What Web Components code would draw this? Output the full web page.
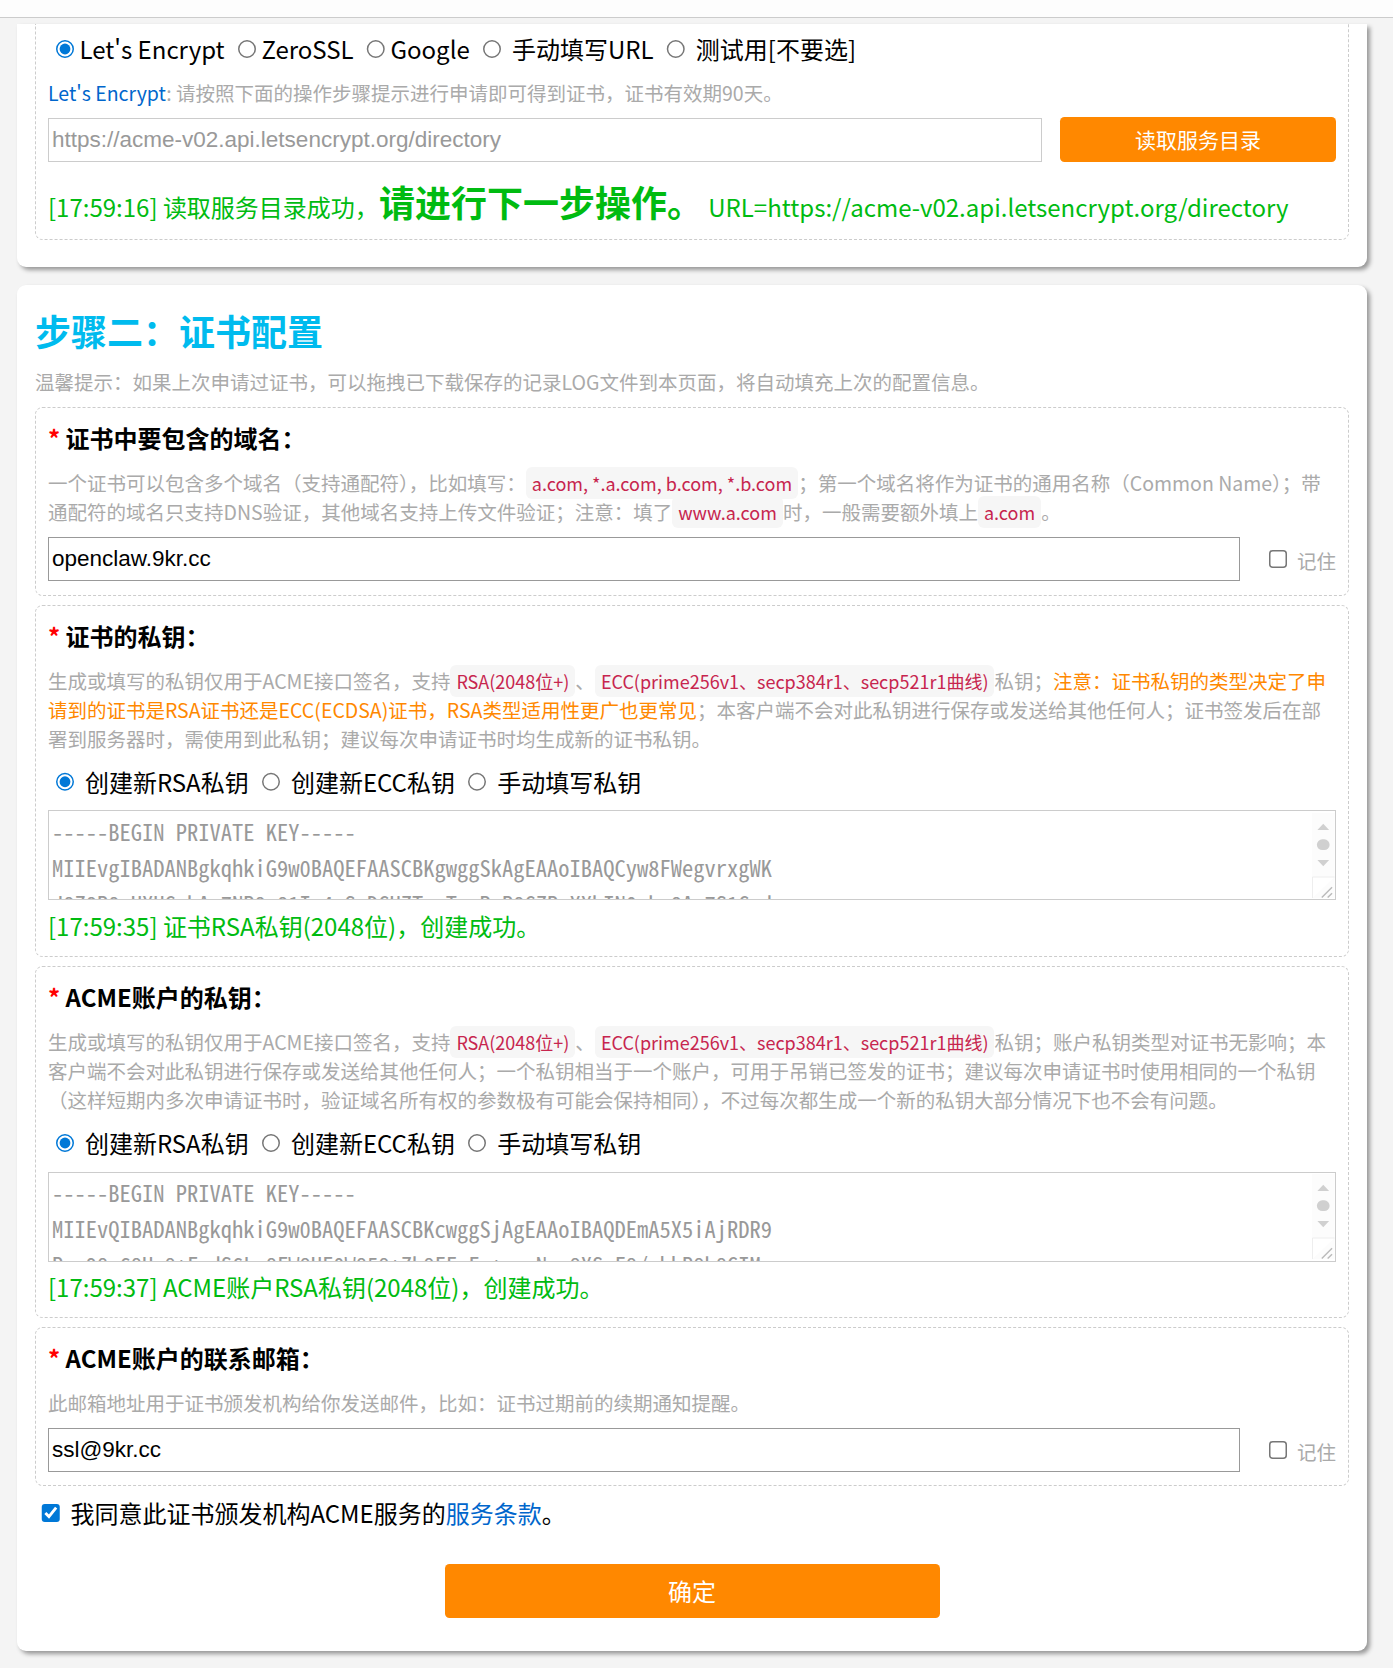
<!DOCTYPE html>
<html lang="zh-CN">
<head>
<meta charset="utf-8">
<title>ACME 证书申请</title>
<style>
  /* Sizes below are base units; the whole page is shown at 150%. */
  body {
    zoom: 1.5;
    margin: 0;
    background: #f4f4f4;
    color: #000;
    font: 16px/1.5 "Noto Sans CJK SC", sans-serif;
  }
  .page { padding: 0 6px 12px 0; }
  main {
    display: flex;
    flex-direction: column;
    gap: 12px;
    max-width: 900px;
    margin: 0 auto;
  }
  .warn { color: #f80; }
</style>
</head>
<body>
<acme-topbar></acme-topbar>
<div class="page">
<main>
  <acme-card continued>
    <acme-field continued>
      <acme-options slot="options" name="ca" items="Let's Encrypt|ZeroSSL|Google| 手动填写URL| 测试用[不要选]"></acme-options>
      <span slot="hint"><acme-link>Let's Encrypt</acme-link>: 请按照下面的操作步骤提示进行申请即可得到证书，证书有效期90天。</span>
      <acme-text label="服务目录URL" value="https://acme-v02.api.letsencrypt.org/directory" disabled>
        <acme-button size="small">读取服务目录</acme-button>
      </acme-text>
      <acme-log slot="log" time="17:59:16">读取服务目录成功，<acme-big>请进行下一步操作。</acme-big> URL=https://acme-v02.api.letsencrypt.org/directory</acme-log>
    </acme-field>
  </acme-card>

  <acme-card heading="步骤二：证书配置" tip="温馨提示：如果上次申请过证书，可以拖拽已下载保存的记录LOG文件到本页面，将自动填充上次的配置信息。">
    <acme-field heading="证书中要包含的域名：">
      <span slot="hint">一个证书可以包含多个域名（支持通配符），比如填写：<acme-code>a.com, *.a.com, b.com, *.b.com</acme-code>；第一个域名将作为证书的通用名称（Common Name）；带通配符的域名只支持DNS验证，其他域名支持上传文件验证；注意：填了<acme-code>www.a.com</acme-code>时，一般需要额外填上<acme-code>a.com</acme-code>。</span>
      <acme-text label="证书中要包含的域名" value="openclaw.9kr.cc"><acme-remember></acme-remember></acme-text>
    </acme-field>

    <acme-field heading="证书的私钥：">
      <span slot="hint">生成或填写的私钥仅用于ACME接口签名，支持<acme-code>RSA(2048位+)</acme-code>、<acme-code>ECC(prime256v1、secp384r1、secp521r1曲线)</acme-code>私钥；<span class="warn">注意：证书私钥的类型决定了申请到的证书是RSA证书还是ECC(ECDSA)证书，RSA类型适用性更广也更常见</span>；本客户端不会对此私钥进行保存或发送给其他任何人；证书签发后在部署到服务器时，需使用到此私钥；建议每次申请证书时均生成新的证书私钥。</span>
      <acme-options name="cert-key" items=" 创建新RSA私钥| 创建新ECC私钥| 手动填写私钥"></acme-options>
      <acme-key label="证书的私钥" value="-----BEGIN PRIVATE KEY-----
MIIEvgIBADANBgkqhkiG9w0BAQEFAASCBKgwggSkAgEAAoIBAQCyw8FWegvrxgWK
J8Z8R8+UXUGxhAv7NR8v81I+4rSpDGUZTwzTvpRrR8GZRvXXhIN0uhx8Av7S1Gsd"></acme-key>
      <acme-log slot="log" time="17:59:35">证书RSA私钥(2048位)，创建成功。</acme-log>
    </acme-field>

    <acme-field heading="ACME账户的私钥：">
      <span slot="hint">生成或填写的私钥仅用于ACME接口签名，支持<acme-code>RSA(2048位+)</acme-code>、<acme-code>ECC(prime256v1、secp384r1、secp521r1曲线)</acme-code>私钥；账户私钥类型对证书无影响；本客户端不会对此私钥进行保存或发送给其他任何人；一个私钥相当于一个账户，可用于吊销已签发的证书；建议每次申请证书时使用相同的一个私钥（这样短期内多次申请证书时，验证域名所有权的参数极有可能会保持相同），不过每次都生成一个新的私钥大部分情况下也不会有问题。</span>
      <acme-options name="account-key" items=" 创建新RSA私钥| 创建新ECC私钥| 手动填写私钥"></acme-options>
      <acme-key label="ACME账户的私钥" value="-----BEGIN PRIVATE KEY-----
MIIEvQIBADANBgkqhkiG9w0BAQEFAASCBKcwggSjAgEAAoIBAQDEmA5X5iAjRDR9
Rvu98v68Ux8+FvdS6Lv8FW8UF0W858+Zh8FFvFv+uuvNvv8XSvF8/vkkR8h8GIMx"></acme-key>
      <acme-log slot="log" time="17:59:37">ACME账户RSA私钥(2048位)，创建成功。</acme-log>
    </acme-field>

    <acme-field heading="ACME账户的联系邮箱：">
      <span slot="hint">此邮箱地址用于证书颁发机构给你发送邮件，比如：证书过期前的续期通知提醒。</span>
      <acme-text label="ACME账户的联系邮箱" value="ssl@9kr.cc"><acme-remember></acme-remember></acme-text>
    </acme-field>

    <acme-agree></acme-agree>
    <acme-button size="large">确定</acme-button>
  </acme-card>
</main>
</div>

<script>
const escapeHtml = s => s.replace(/[&<>"]/g, c => ({'&': '&amp;', '<': '&lt;', '>': '&gt;', '"': '&quot;'}[c]));

function define(name, css, render) {
  customElements.define(name, class extends HTMLElement {
    connectedCallback() {
      if (this.shadowRoot) return;
      this.attachShadow({mode: 'open'}).innerHTML = `<style>${css}</style>${render(this)}`;
    }
  });
}

define('acme-topbar', `
  :host { display: block; height: 11px; margin-bottom: 4px; background: #fdfdfd; border-bottom: 1px solid #ccc; }
`, () => '');

define('acme-card', `
  :host { display: flex; flex-direction: column; gap: 6px; padding: 12px 12px 22px; background: #fff;
    border-radius: 6px; box-shadow: 2px 2px 3px #999; }
  :host([continued]) { padding: 0 12px 18px; border-radius: 0 0 6px 6px; }
  header { display: flex; flex-direction: column; gap: 7px; padding-bottom: 1px; }
  h2 { margin: 0; color: #0be; font-size: 24px; line-height: 36px; }
  p { margin: 0; color: #aaa; font-size: 13px; }
`, el => (el.hasAttribute('heading')
  ? `<header><h2>${el.getAttribute('heading')}</h2><p>${el.getAttribute('tip')}</p></header>` : '') + '<slot></slot>');

define('acme-field', `
  :host { display: block; }
  section { display: flex; flex-direction: column; gap: 7px; padding: 8px 8px 9px; border: 1px dashed #ccc; border-radius: 5px; }
  section.logged { padding-bottom: 8px; }
  h3 { margin: 0 0 1px; font-size: 16px; line-height: 24px; }
  h3 span { color: #f00; }
  p { margin: 0; color: #aaa; font-size: 13px; }
  .body { display: flex; flex-direction: column; gap: 7px; }
  .work { display: flex; flex-direction: column; gap: 5px; }
  :host([continued]) section { padding-top: 5px; padding-bottom: 7px; border-top: 0; border-radius: 0 0 5px 5px; }
  :host([continued]) .work { gap: 8px; }
`, el => `<section class="${el.querySelector('[slot=log]') ? 'logged' : ''}">
  ${el.hasAttribute('heading') ? `<h3><span>*</span> ${el.getAttribute('heading')}</h3>` : ''}<slot name="options"></slot>
  <p><slot name="hint"></slot></p>
  <div class="work"><div class="body"><slot></slot></div><slot name="log"></slot></div>
</section>`);

define('acme-options', `
  :host { display: block; }
  input { accent-color: #0078d7; }
`, el => el.getAttribute('items').split('|').map((t, i) =>
  `<label><input type="radio" name="${el.getAttribute('name')}"${i ? '' : ' checked'}>${escapeHtml(t)}</label>`).join(' '));

define('acme-text', `
  :host { display: flex; align-items: center; }
  input { box-sizing: content-box; flex: 1; min-width: 0; height: 28px; padding: 0 2px; border: 1px solid #999; border-radius: 0;
    background: #fff; color: #000; font: 15px "Liberation Sans", sans-serif; }
  input:disabled { border-color: #ccc; color: #999; }
`, el => `<input type="text" aria-label="${el.getAttribute('label')}" value="${el.getAttribute('value')}"${el.hasAttribute('disabled') ? ' disabled' : ''}><slot></slot>`);

define('acme-remember', `
  :host { display: block; margin: 2px 0 0 15px; color: #aaa; font-size: 13px; }
  input { accent-color: #0078d7; }
`, () => '<label><input type="checkbox"> 记住</label>');

define('acme-key', `
  :host { display: block; position: relative; }
  textarea { display: block; box-sizing: border-box; width: 100%; height: 60px; padding: 1px 23px 0 2px; margin: 0;
    border: 1px solid #ccc; border-radius: 0; resize: none; overflow: hidden; background: #fff; color: #999;
    font: 15px/24px "Noto Sans Mono CJK SC", "Noto Sans CJK SC", monospace; font-feature-settings: "hwid"; white-space: pre; }
  svg { position: absolute; top: 1px; right: 1px; width: 15px; height: 58px; }
`, el => `<textarea aria-label="${el.getAttribute('label')}" disabled>${escapeHtml(el.getAttribute('value'))}</textarea>
<svg viewBox="0 0 23 87" aria-hidden="true">
  <rect width="23" height="87" fill="#fcfcfc"/>
  <path d="M5.500 17.500L11.500 11L17.500 17.500ZM5.500 48L11.500 54.500L17.500 48Z" fill="#d0d0d0"/>
  <rect x="5" y="27" width="13" height="11" rx="5.500" fill="#d0d0d0"/>
  <path d="M.5 87V65.500H23" fill="#fff" stroke="#eee"/>
  <path d="M10 86.500L20.500 76M16 86.500L20.500 82" fill="none" stroke="#bbb" stroke-width="1.500"/>
</svg>`);

define('acme-log', `
  :host { display: block; color: #0b1; }
`, el => `[${el.getAttribute('time')}] <slot></slot>`);

define('acme-big', `
  strong { font-size: 24px; }
`, () => '<strong><slot></slot></strong>');

define('acme-code', `
  code { padding: 2px 4px; border-radius: 4px; background: #f6f6f6; color: #c7254e; font-family: inherit; font-size: 12px; }
`, () => '<code><slot></slot></code>');

define('acme-link', `
  a { color: #06c; text-decoration: none; }
`, () => '<a href="#"><slot></slot></a>');

define('acme-button', `
  :host { display: block; }
  button { display: block; width: 100%; margin: 0; padding: 0; border: 0; border-radius: 3px; background: #f80; color: #fff; font: inherit; cursor: pointer; }
  :host([size=small]) { align-self: flex-start; width: 184px; margin-left: 12px; font-size: 14px; }
  :host([size=small]) button { height: 30px; }
  :host([size=large]) { width: 330px; max-width: 100%; margin: 16px auto 0; }
  :host([size=large]) button { height: 36px; }
`, () => '<button type="button"><slot></slot></button>');

define('acme-agree', `
  :host { display: block; }
  input { accent-color: #0078d7; }
  a { color: #06c; text-decoration: none; }
`, () => '<label><input type="checkbox" checked> 我同意此证书颁发机构ACME服务的</label><a href="#">服务条款</a>。');
</script>
</body>
</html>
